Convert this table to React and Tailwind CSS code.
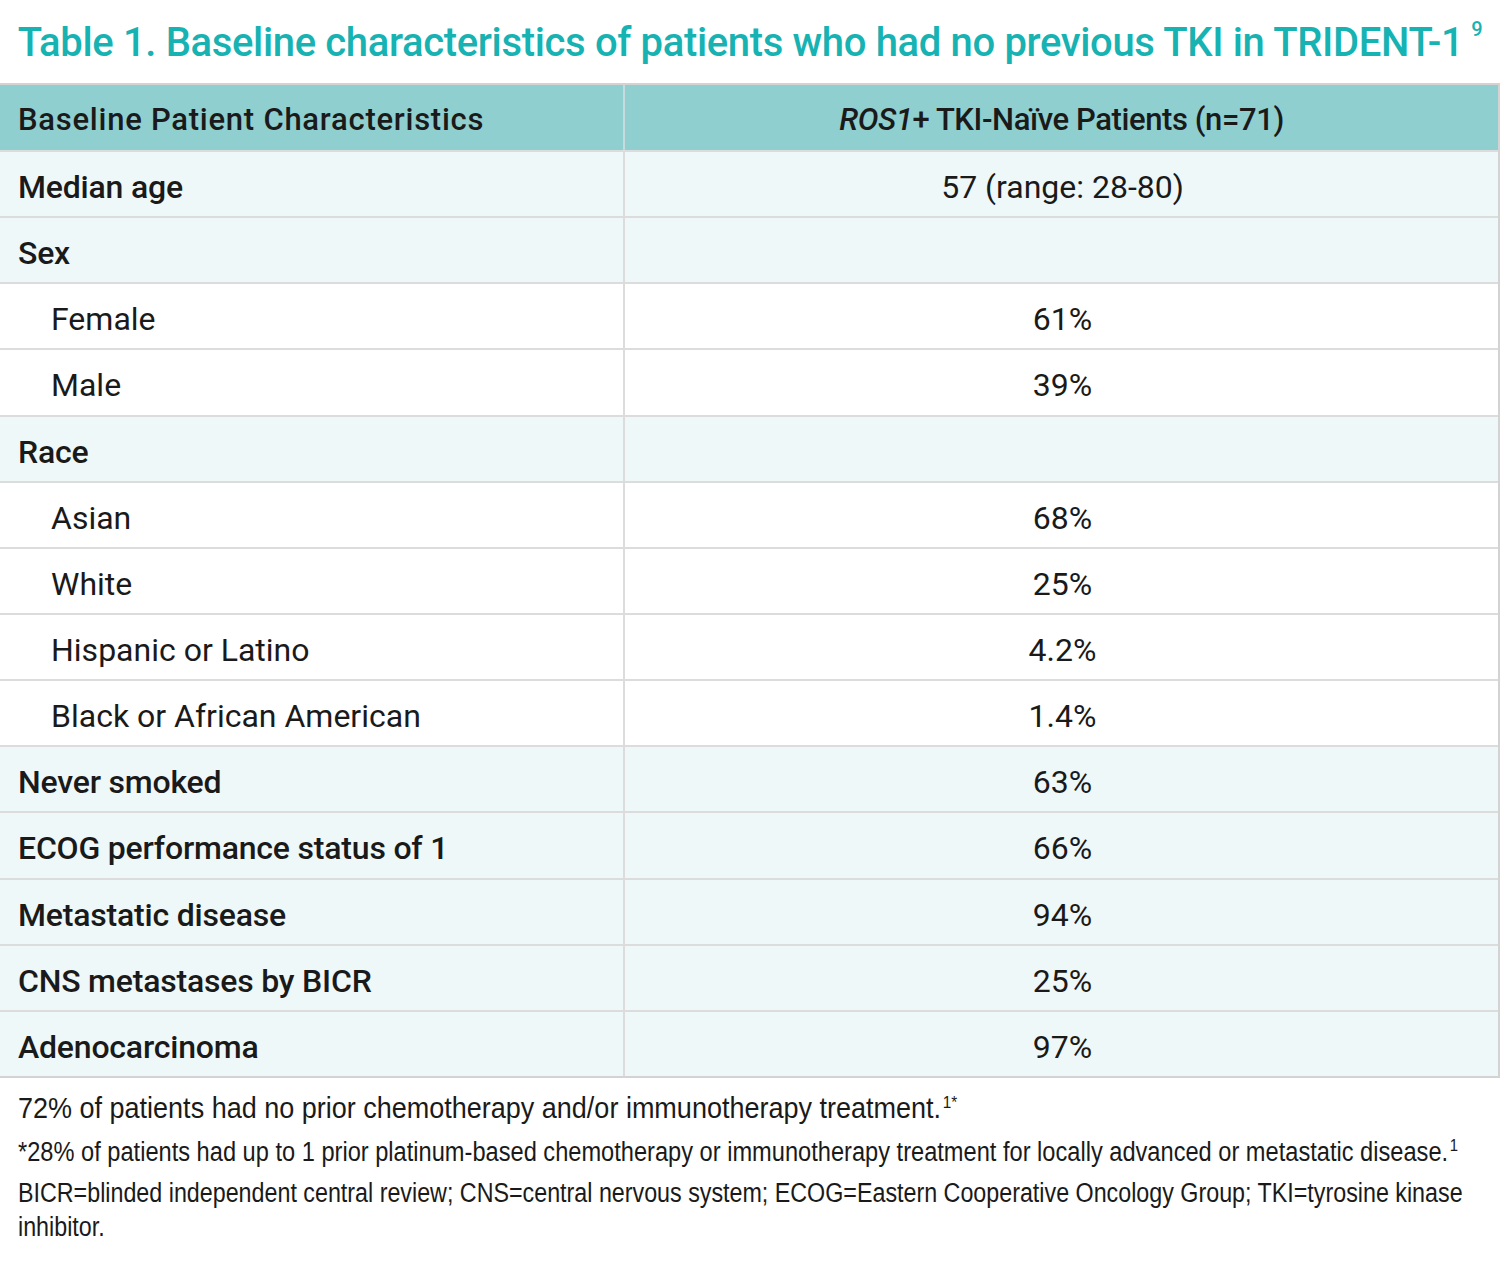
const rows = [
  { label: 'Median age', value: '57 (range: 28-80)', bold: true },
  { label: 'Sex', value: '', bold: true },
  { label: 'Female', value: '61%' },
  { label: 'Male', value: '39%' },
  { label: 'Race', value: '', bold: true },
  { label: 'Asian', value: '68%' },
  { label: 'White', value: '25%' },
  { label: 'Hispanic or Latino', value: '4.2%' },
  { label: 'Black or African American', value: '1.4%' },
  { label: 'Never smoked', value: '63%', bold: true },
  { label: 'ECOG performance status of 1', value: '66%', bold: true },
  { label: 'Metastatic disease', value: '94%', bold: true },
  { label: 'CNS metastases by BICR', value: '25%', bold: true },
  { label: 'Adenocarcinoma', value: '97%', bold: true },
];

const tableFont = "font-['Roboto','Liberation_Sans',sans-serif]";
const noteFont = "font-['Liberation_Sans',Arial,sans-serif]";

export default function App() {
  return (
    <div className="w-[1500px] h-[1261px] overflow-hidden bg-white text-[#1a1a1a]">
      <h1 className={`${tableFont} h-[83px] flex items-center justify-center pt-[2px] text-[40px] font-medium tracking-[-0.35px] text-[#17b2b2]`}>
        Table 1. Baseline characteristics of patients who had no previous TKI in TRIDENT-1
        <sup className="ml-[8px] text-[20px] -top-[14px]">9</sup>
      </h1>
      <div className={`${tableFont} border-t-2 border-b-2 border-r-2 border-[#d3d3d3]`}>
        <div className="grid grid-cols-[625px_1fr] h-[65px] bg-[#8fcfd0] text-[31px] font-medium">
          <div className="flex items-center pl-[18px] pt-[6px] border-r-2 border-[#c6dcdc] tracking-[0.75px]">Baseline Patient Characteristics</div>
          <div className="flex items-center justify-center pt-[6px] tracking-[-0.4px]">
            <span className="italic">ROS1</span>+ TKI-Naïve Patients (n=71)
          </div>
        </div>
        {rows.map((r) => (
          <div
            key={r.label}
            className={`grid grid-cols-[625px_1fr] h-[66.15px] border-t-2 border-[#dcdcdc] text-[32px] ${r.bold ? 'bg-[#eff8f8]' : 'bg-white'}`}
          >
            <div
              className={`flex items-center pt-[6px] border-r-2 border-[#dcdcdc] ${r.bold ? 'pl-[18px] font-medium tracking-[-0.2px]' : 'pl-[51px] font-normal'}`}
            >
              {r.label}
            </div>
            <div className="flex items-center justify-center pt-[6px] pl-[2px]">{r.value}</div>
          </div>
        ))}
      </div>
      <div className={`${noteFont} pl-[18px] pt-[10px]`}>
        <p className="w-[1700px] origin-left scale-x-[0.9] text-[30px] leading-[40px]">
          72% of patients had no prior chemotherapy and/or immunotherapy treatment.<sup className="ml-[2px] text-[17px] -top-[10px]">1*</sup>
        </p>
        <p className="mt-[5px] w-[1680px] origin-left scale-x-[0.875] text-[27px] leading-[38px]">
          *28% of patients had up to 1 prior platinum-based chemotherapy or immunotherapy treatment for locally advanced or metastatic disease.<sup className="ml-[2px] text-[17px] -top-[10px]">1</sup>
        </p>
        <p className="mt-[5px] w-[1700px] origin-left scale-x-[0.862] text-[27px] leading-[34px]">
          BICR=blinded independent central review; CNS=central nervous system; ECOG=Eastern Cooperative Oncology Group; TKI=tyrosine kinase inhibitor.
        </p>
      </div>
    </div>
  );
}
